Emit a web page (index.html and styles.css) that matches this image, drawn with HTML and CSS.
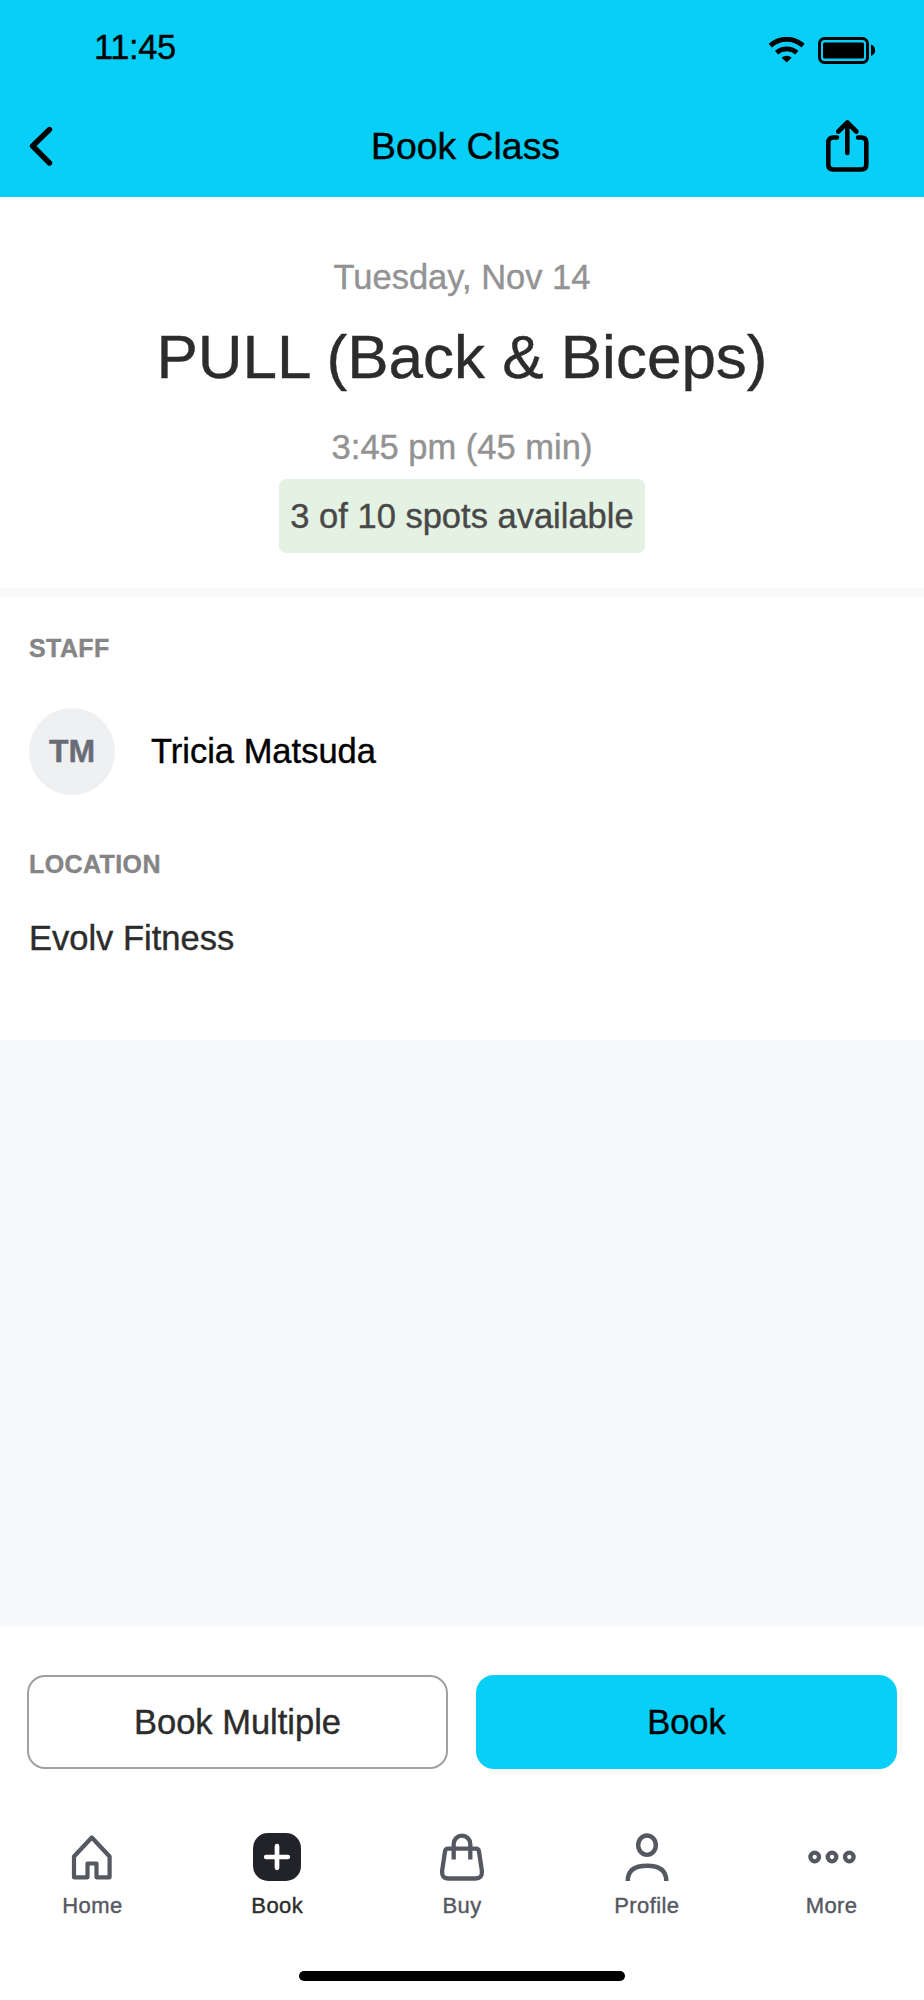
FILE: index.html
```html
<!DOCTYPE html>
<html lang="en">
<head>
<meta charset="utf-8">
<title>Book Class</title>
<link rel="stylesheet" href="styles.css">
</head>
<body>
<div class="screen">
  <header class="top">
    <div class="status">
      <span class="time">11:45</span>
      <div class="indicators">
        <svg class="wifi" width="36" height="26" viewBox="0 0 36 26" fill="none" stroke="#000" stroke-width="4.8">
          <path d="M1.300 8.600C10.900 .1 24.500 .1 34.100 8.600"/>
          <path d="M7.500 15.600c6-5 14.400-5 20.400 0"/>
          <path d="M17.700 25.600l-5-4.900c2.900-2.700 7.100-2.700 10 0z" fill="#000" stroke="none"/>
        </svg>
        <svg class="battery" width="58" height="28" viewBox="0 0 58 28">
          <rect x="1.500" y="1.500" width="48" height="24" rx="5" fill="none" stroke="#000" stroke-width="3"/>
          <rect x="5" y="5.500" width="41" height="16" rx="1.500"/>
          <path d="M53 7.500c5.500 2 5.500 9.500 0 11.500z"/>
        </svg>
      </div>
    </div>
    <div class="bar">
      <svg class="back" width="24" height="40" viewBox="0 0 24 40" fill="none" stroke="#000" stroke-width="5.400" stroke-linecap="round" stroke-linejoin="round"><path d="M20.500 3.500L3.600 20l16.900 17"/></svg>
      <h1 class="bar-title">Book Class</h1>
      <svg class="share" width="44" height="53" viewBox="0 0 44 53" fill="none" stroke="#000" stroke-width="4.600" stroke-linecap="round" stroke-linejoin="round">
        <path d="M11 17.500H7.200Q2.300 17.500 2.300 22.500v22q0 5 5 5h28q5 0 5-5v-22q0-5-5-5H32"/>
        <path d="M21.300 33V2.800M12.300 11.500l9-9 9 9"/>
      </svg>
    </div>
  </header>

  <section class="summary">
    <p class="meta">Tuesday, Nov 14</p>
    <h2 class="class-name">PULL (Back &amp; Biceps)</h2>
    <p class="meta">3:45 pm (45 min)</p>
    <p class="spots">3 of 10 spots available</p>
  </section>

  <section class="details">
    <h3 class="label">STAFF</h3>
    <div class="person">
      <span class="avatar">TM</span>
      <span class="person-name">Tricia Matsuda</span>
    </div>
    <h3 class="label">LOCATION</h3>
    <p class="place">Evolv Fitness</p>
  </section>

  <footer class="bottom">
    <div class="actions">
      <button class="btn">Book Multiple</button>
      <button class="btn btn-primary">Book</button>
    </div>
    <nav class="tabs">
      <a class="tab"><svg width="48" height="48" viewBox="0 0 48 48" fill="none" stroke="#555861" stroke-width="4.200" stroke-linejoin="round"><path d="M6 23.500L23.800 4.500l17.800 19V44.300H28.500V30.500h-9V44.300H6z"/></svg><span>Home</span></a>
      <a class="tab tab-active"><svg width="48" height="48" viewBox="0 0 48 48"><rect width="48" height="48" rx="15" fill="#222329"/><path d="M24 13.200v21.600M13.200 24h21.600" stroke="#fff" stroke-width="4.700" stroke-linecap="round"/></svg><span>Book</span></a>
      <a class="tab"><svg width="48" height="48" viewBox="0 0 48 48" fill="none" stroke="#555861" stroke-width="4.300"><path d="M10 15.700H38Q40.600 15.700 41 18.500L43.900 38Q44.500 45.500 37.500 45.500H10.500Q3.500 45.500 4.100 38L7 18.500Q7.400 15.700 10 15.700z"/><path d="M15.700 26.500V11a8.300 8.300 0 0 1 16.600 0V26.500"/></svg><span>Buy</span></a>
      <a class="tab"><svg width="48" height="48" viewBox="0 0 48 48" fill="none" stroke="#555861" stroke-width="4.400"><ellipse cx="24" cy="12.200" rx="8.800" ry="9.700"/><path d="M4.700 48c0-10.500 7-15.200 19.300-15.200S43.300 37.500 43.300 48"/></svg><span>Profile</span></a>
      <a class="tab"><svg width="48" height="48" viewBox="0 0 48 48" fill="none" stroke="#555861" stroke-width="4.300"><circle cx="6.700" cy="24" r="4.300"/><circle cx="24" cy="24" r="4.300"/><circle cx="41.300" cy="24" r="4.300"/></svg><span>More</span></a>
    </nav>
    <div class="home-indicator"></div>
  </footer>
</div>
</body>
</html>
```
FILE: styles.css
```css
* { box-sizing: border-box; }

body, h1, h2, h3, p { margin: 0; font-weight: 400; }

body {
  font-family: "Liberation Sans", Arial, sans-serif;
  font-size: 34.5px;
  line-height: 40px;
  color: #2c2c2c;
  -webkit-text-stroke: .4px currentColor;
}

.screen {
  width: 924px;
  height: 2000px;
  display: flex;
  flex-direction: column;
  background: #f8f9fb;
}

.top {
  height: 197px;
  background: #08cff8;
  color: #000;
}

.status {
  display: flex;
  justify-content: space-between;
  height: 97px;
  padding: 27px 48px 0 94px;
}

.time { letter-spacing: -.4px; }

.indicators {
  display: flex;
  gap: 13px;
  padding-top: 10px;
}

.bar {
  display: grid;
  grid-template-columns: 60px 1fr 60px;
  align-items: center;
  height: 98px;
  padding: 0 54px 0 29px;
}

.bar-title {
  font-size: 37.4px;
  text-align: center;
  padding-left: 32px;
}

.share { justify-self: end; }

.summary {
  display: flex;
  flex-direction: column;
  align-items: center;
  height: 391px;
  padding-top: 60px;
  background: #fff;
}

.meta { color: #939393; }

.class-name {
  font-size: 62px;
  line-height: 70px;
  margin: 25px 0 35px;
}

.spots {
  margin-top: 12px;
  padding: 0 11.5px;
  line-height: 74px;
  border-radius: 7px;
  background: #e4f2e4;
  color: #484848;
}

.details {
  height: 443px;
  margin-top: 9px;
  padding: 36px 29px 0;
  background: #fff;
}

.label {
  font-size: 25px;
  font-weight: 700;
  line-height: 30px;
  letter-spacing: .4px;
  color: #858585;
}

.person {
  display: flex;
  align-items: center;
  gap: 36px;
  margin: 45px 0 54px;
  color: #000;
}

.person-name { margin-top: -2px; }

.avatar {
  width: 86px;
  height: 87px;
  border-radius: 50%;
  background: #eff0f2;
  color: #696b76;
  font-size: 32px;
  font-weight: 700;
  line-height: 87px;
  text-align: center;
}

.place { margin-top: 39px; }

.bottom {
  display: flex;
  flex-direction: column;
  align-items: center;
  height: 373px;
  margin-top: auto;
  padding-top: 48px;
  background: #fff;
}

.actions {
  display: grid;
  grid-template-columns: 1fr 1fr;
  gap: 28px;
  width: 870px;
}

.btn {
  height: 94px;
  padding: 0;
  border: 2px solid #a0a0a0;
  border-radius: 18px;
  background: #fff;
  color: #2c2c2c;
  font: inherit;
}

.btn-primary {
  border: 0;
  background: #08cff8;
  color: #000;
}

.tabs {
  display: grid;
  grid-template-columns: repeat(5, 1fr);
  width: 100%;
  margin-top: 64px;
}

.tab {
  display: flex;
  flex-direction: column;
  align-items: center;
  gap: 12px;
  color: #555861;
  font-size: 22px;
  line-height: 26px;
  letter-spacing: .4px;
}

.tab-active { color: #2c2c2c; }

.home-indicator {
  width: 326px;
  height: 10px;
  margin-top: 52px;
  border-radius: 5px;
  background: #000;
}
```
